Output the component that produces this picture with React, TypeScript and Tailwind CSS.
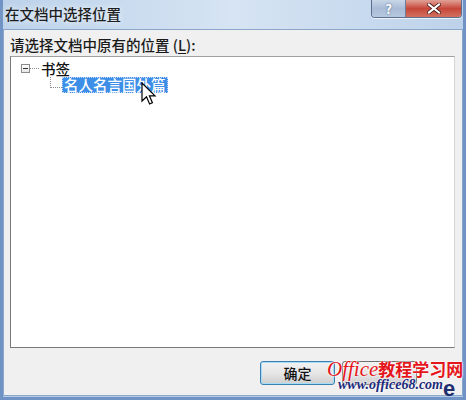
const font = { fontFamily: '"Noto Sans CJK SC", "Noto Sans", sans-serif' };

function Cursor() {
  return (
    <svg width="16" height="25" viewBox="0 0 16 25" className="absolute left-[130px] top-[5px]">
      <path
        d="M1 1 L1 19 L5.5 14.8 L8.6 22 L11.4 20.8 L8.4 13.8 L14 13.8 Z"
        fill="#fff"
        stroke="#000"
        strokeWidth="1.2"
        strokeLinejoin="miter"
      />
    </svg>
  );
}

function TitleButtons() {
  return (
    <div className="absolute right-[1px] top-0 flex h-[18px] overflow-hidden rounded-b-[4px] border border-t-0 border-[#5c6f8c] shadow-[0_1px_0_rgba(255,255,255,0.7)]">
      <div className="flex w-[34px] items-center justify-center border-r border-[#6b7d99] bg-gradient-to-b from-[#c9d6e8] via-[#a9bcd6] to-[#b6c8df] text-[13px] font-bold text-white [text-shadow:0_0_2px_#4a5d7c]">
        ?
      </div>
      <div className="flex w-[55px] items-center justify-center bg-gradient-to-b from-[#e0a197] via-[#c6463a] to-[#d2705f]">
        <svg width="14" height="11" viewBox="0 0 14 11">
          <path d="M2 1.5 L12 9.5 M12 1.5 L2 9.5" stroke="#3c1410" strokeWidth="3.6" strokeLinecap="square" />
          <path d="M2 1.5 L12 9.5 M12 1.5 L2 9.5" stroke="#fff" strokeWidth="2.2" strokeLinecap="square" />
        </svg>
      </div>
    </div>
  );
}

export default function App() {
  return (
    <div
      className="relative flex h-[400px] w-[466px] flex-col overflow-hidden bg-gradient-to-b from-[#b7cde6] via-[#c9dbee] to-[#b4cbe6] px-[3px] pb-[4px]"
      style={font}
    >
      <div className="absolute inset-y-0 left-0 w-[3px] bg-[#6f93c4]" />
      <div className="absolute inset-y-0 right-0 w-[3px] bg-[#6f93c4]" />
      <div className="absolute inset-x-0 bottom-0 h-[3px] bg-[#6f93c4]" />

      {/* title bar */}
      <div className="relative h-[29px] shrink-0 bg-gradient-to-r from-[#bcd2ea] via-[#d6e4f3] to-[#bdd2ea]">
        <div className="absolute left-[2px] top-[4px] text-[14.5px] font-medium leading-[20px] text-[#1e1e1e] [text-shadow:0_0_6px_#fff]">
          在文档中选择位置
        </div>
        <TitleButtons />
      </div>

      {/* client area */}
      <div className="relative flex flex-1 flex-col border border-[#8aa6c9] bg-[#f0f0f0] pl-[6px] pr-[7px]">
        <div className="mt-[5px] h-[21px] text-[14.5px] font-medium leading-[20px] text-[#1a1a1a]">
          请选择文档中原有的位置 (<span className="underline underline-offset-2">L</span>):
        </div>

        <div className="relative h-[292px] border border-t-[#a0a0a0] border-l-[#7a7a7a] border-r-[#d4d4d4] border-b-[#7a7a7a] bg-white">
          <div className="flex items-center pl-[10px] pt-[3px]">
            <div className="flex h-[9px] w-[9px] items-center justify-center border border-[#8c8c8c] bg-gradient-to-b from-white to-[#e6e6e6]">
              <div className="h-[1px] w-[5px] bg-[#333]" />
            </div>
            <div className="w-[9px] border-t border-dotted border-[#8a8a8a]" />
            <span className="ml-[2px] text-[14.5px] font-medium leading-[17px] text-[#111]">书签</span>
          </div>
          <div className="relative flex pl-[39px]">
            <div className="h-[11px] w-[12px] border-b border-l border-dotted border-[#8a8a8a]" />
            <span className="border border-dotted border-[#c8d8ff] bg-[#3d8ee6] px-[1px] text-[14.5px] font-medium leading-[14px] text-white">
              名人名言国外篇
            </span>
            <Cursor />
          </div>
        </div>

        <div className="mt-[13px] flex gap-[7px] pl-[250px]">
          <div className="flex h-[24px] w-[75px] items-center justify-center rounded-[3px] border border-[#3c7fb1] bg-gradient-to-b from-[#f2f2f2] via-[#e6e6e6] to-[#cfcfcf] text-[14px] font-medium text-[#111] shadow-[inset_0_0_0_1px_#a6dcf8]">
            确定
          </div>
          <div className="h-[24px] w-[75px] rounded-[3px] border border-[#707070] bg-gradient-to-b from-[#f2f2f2] via-[#e6e6e6] to-[#cfcfcf]" />
        </div>
      </div>

      {/* watermark */}
      <div
        className="pointer-events-none absolute left-[443px] top-[382px] text-[22px] font-bold leading-[14px] text-[#1f2f6e]"
        style={{ fontFamily: '"Liberation Sans", sans-serif' }}
      >
        e
      </div>
      <div className="pointer-events-none absolute left-[327px] top-[359px] flex items-baseline text-[#e4161b] [text-shadow:0_0_2px_#fff,0_0_2px_#fff]">
        <span className="text-[21px] italic leading-[20px]" style={{ fontFamily: '"Liberation Serif", serif' }}>
          Office
        </span>
        <span className="text-[17px] font-bold leading-[20px]" style={font}>
          教程学习网
        </span>
      </div>
      <div
        className="pointer-events-none absolute left-[338px] top-[378px] text-[14px] font-bold italic leading-[13px] text-[#1c2a7a] [text-shadow:0_0_2px_#fff,0_0_2px_#fff]"
        style={{ fontFamily: '"Liberation Serif", serif' }}
      >
        www.office68.com
      </div>
    </div>
  );
}
